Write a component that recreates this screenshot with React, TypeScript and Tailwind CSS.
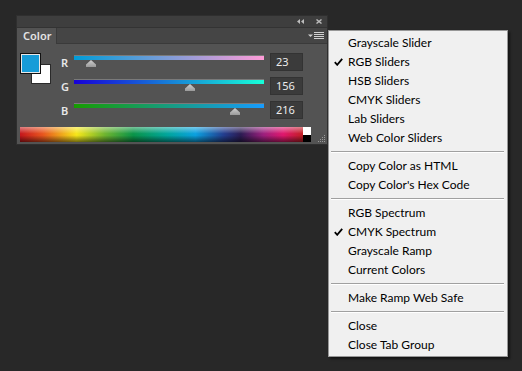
import React from "react";

const Check = () => (
  <svg width="9" height="8" viewBox="0 0 9 8" className="absolute left-[5px] top-[6px]">
    <path d="M0.8 4.2 L3.2 6.8 L8.2 0.8" stroke="#000" strokeWidth="1.8" fill="none" />
  </svg>
);

const Thumb = ({ left }: { left: number }) => (
  <svg
    width="10"
    height="7"
    viewBox="0 0 10 7"
    className="absolute top-[7px]"
    style={{ left: left - 5 }}
  >
    <defs>
      <linearGradient id="tg" x1="0" y1="0" x2="0" y2="1">
        <stop offset="0" stopColor="#d0d0d0" />
        <stop offset="1" stopColor="#9a9a9a" />
      </linearGradient>
    </defs>
    <polygon points="5,0 10,4.5 10,7 0,7 0,4.5" fill="url(#tg)" />
  </svg>
);

type Row = { label: string; value: number; grad: string };

const rows: Row[] = [
  { label: "R", value: 23, grad: "linear-gradient(to right, rgb(0,156,216), rgb(255,156,216))" },
  { label: "G", value: 156, grad: "linear-gradient(to right, rgb(23,0,216), rgb(23,255,216))" },
  { label: "B", value: 216, grad: "linear-gradient(to right, rgb(23,156,0), rgb(23,156,255))" },
];

type Item = { t: string; c?: boolean } | "sep";
const items: Item[] = [
  { t: "Grayscale Slider" },
  { t: "RGB Sliders", c: true },
  { t: "HSB Sliders" },
  { t: "CMYK Sliders" },
  { t: "Lab Sliders" },
  { t: "Web Color Sliders" },
  "sep",
  { t: "Copy Color as HTML" },
  { t: "Copy Color's Hex Code" },
  "sep",
  { t: "RGB Spectrum" },
  { t: "CMYK Spectrum", c: true },
  { t: "Grayscale Ramp" },
  { t: "Current Colors" },
  "sep",
  { t: "Make Ramp Web Safe" },
  "sep",
  { t: "Close" },
  { t: "Close Tab Group" },
];

export default function App() {
  return (
    <div
      className="relative w-[522px] h-[371px] bg-[#282828] overflow-hidden pt-[15px] pl-[16px]"
      style={{ fontFamily: '"Noto Sans", "Open Sans", sans-serif' }}
    >
      {/* Panel */}
      <div className="w-[312px] h-[130px] flex flex-col border border-[#2f2f2f] bg-[#535353]">
        {/* top strip */}
        <div className="h-[12px] bg-[#3e3e3e] border-b border-[#333] flex items-center justify-end pr-[5px] gap-[12px]">
          <svg width="7" height="5" viewBox="0 0 7 5">
            <polygon points="3,0 3,5 0,2.5" fill="#bdbdbd" />
            <polygon points="7,0 7,5 4,2.5" fill="#bdbdbd" />
          </svg>
          <svg width="6" height="5" viewBox="0 0 6 5">
            <path d="M0.5 0.5 L5.5 4.5 M5.5 0.5 L0.5 4.5" stroke="#bdbdbd" strokeWidth="1.4" />
          </svg>
        </div>
        {/* tab row */}
        <div className="h-[16px] flex bg-[#454545]">
          <div className="w-[40px] h-[16px] bg-[#535353] border-r border-[#3a3a3a] text-[11px] leading-[16px] text-[#e4e4e4] pl-[6px] font-semibold">
            Color
          </div>
          <div className="flex-1 border-b border-[#3a3a3a] flex items-center justify-end pr-[3px]">
            <svg width="16" height="8" viewBox="0 0 16 8">
              <polygon points="0,2.5 5,2.5 2.5,5" fill="#d0d0d0" />
              <rect x="6" y="0" width="10" height="1" fill="#d0d0d0" />
              <rect x="6" y="2" width="10" height="1" fill="#d0d0d0" />
              <rect x="6" y="4" width="10" height="1" fill="#d0d0d0" />
              <rect x="6" y="6" width="10" height="1" fill="#d0d0d0" />
            </svg>
          </div>
        </div>
        {/* body */}
        <div className="flex-1 flex flex-col pl-[3px] pt-[9px]">
          <div className="flex">
            <div className="relative w-[31px] h-[31px]">
              <div className="absolute left-[11px] top-[11px] w-[20px] h-[20px] bg-white border border-[#2a2a2a]" />
              <div className="absolute left-0 top-0 w-[21px] h-[21px] bg-[#111] p-[1px]">
                <div className="w-full h-full bg-[#e8e8e8] p-[1px]">
                  <div className="w-full h-full bg-[#179cd8]" />
                </div>
              </div>
            </div>
            <div className="flex flex-col ml-[10px] gap-[6px]">
              {rows.map((r) => (
                <div key={r.label} className="flex h-[18px]">
                  <div className="w-[13px] text-[11px] font-semibold text-[#e8e8e8] leading-[18px] pt-[1px]">
                    {r.label}
                  </div>
                  <div className="relative w-[190px] h-[18px]">
                    <div
                      className="absolute left-0 top-[2px] w-[190px] h-[5px] border-t border-[#7a7a7a]"
                      style={{ background: r.grad }}
                    />
                    <Thumb left={Math.round((r.value / 255) * 190)} />
                  </div>
                  <div className="ml-[6px] w-[33px] h-[18px] bg-[#3b3b3b] border border-[#333] text-[11px] leading-[16px] text-[#ececec] pl-[5px]">
                    {r.value}
                  </div>
                </div>
              ))}
            </div>
          </div>
          <div className="flex items-end mt-[8px]">
            <div className="relative flex w-[291px] h-[15px]">
              <div
                className="relative w-[283px] h-[15px]"
                style={{
                  background:
                    "linear-gradient(to right, #c4161c, #e8551e 8%, #f6e71a 20%, #6fb52f 30%, #0a9448 40%, #00a69c 52%, #0aa0e0 62%, #233d8e 72%, #2b1b52 78%, #9b1f7d 86%, #e0176d 93%, #c01e22)",
                }}
              >
                <div
                  className="absolute inset-0"
                  style={{
                    background:
                      "linear-gradient(to bottom, rgba(255,255,255,0.45), rgba(255,255,255,0) 45%, rgba(0,0,0,0) 55%, rgba(0,0,0,0.55))",
                  }}
                />
              </div>
              <div className="flex flex-col w-[8px]">
                <div className="h-[8px] bg-white" />
                <div className="h-[7px] bg-black" />
              </div>
            </div>
            <svg width="8" height="8" viewBox="0 0 8 8" className="ml-[7px] mb-[-1px]">
              {[
                [6, 0],
                [4, 2],
                [6, 2],
                [2, 4],
                [4, 4],
                [6, 4],
                [0, 6],
                [2, 6],
                [4, 6],
                [6, 6],
              ].map(([x, y], i) => (
                <rect key={i} x={x} y={y} width="1" height="1" fill="#9a9a9a" />
              ))}
            </svg>
          </div>
        </div>
      </div>

      {/* Context menu */}
      <div
        className="absolute left-[328px] top-[30px] w-[180px] bg-[#f0f0f0] border border-[#979797] py-[2px] shadow-[2px_2px_2px_rgba(0,0,0,0.5)]"
        style={{ fontFamily: 'Lato, "Noto Sans", sans-serif' }}
      >
        {items.map((it, i) =>
          it === "sep" ? (
            <div key={i} className="h-[9px] flex flex-col justify-center ml-[2px] mr-[3px]">
              <div className="h-px bg-[#a0a0a0]" />
              <div className="h-px bg-white" />
            </div>
          ) : (
            <div key={i} className="relative h-[19px] pl-[19px] text-[12px] leading-[19px] text-black whitespace-nowrap">
              {it.c && <Check />}
              {it.t}
            </div>
          )
        )}
      </div>
    </div>
  );
}
